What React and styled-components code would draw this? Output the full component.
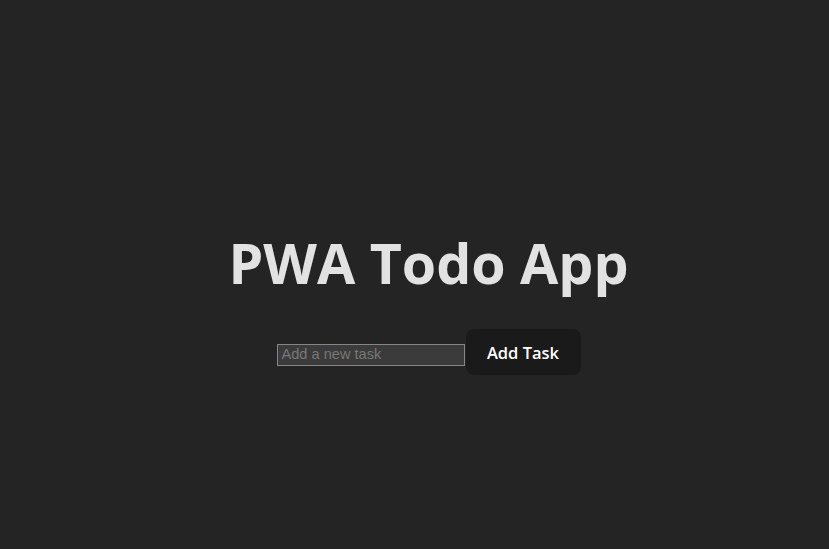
import React from "react";
import styled, { createGlobalStyle } from "styled-components";

const Global = createGlobalStyle`
  html, body { margin: 0; padding: 0; }
  body {
    background: #242424;
    color: rgba(255,255,255,0.87);
    font-family: "Open Sans", "Noto Sans", sans-serif;
    line-height: 1.5;
  }
`;

const Page = styled.main`
  min-height: 100vh;
  box-sizing: border-box;
  padding: 62px 0 4px 28px;
  display: flex;
  flex-direction: column;
  align-items: center;
  justify-content: center;
`;

const Title = styled.h1`
  margin: 0 0 36px;
  font-size: 55.5px;
  font-weight: 700;
  line-height: 1.1;
  color: rgba(255,255,255,0.87);
  letter-spacing: 0;
`;

const Form = styled.form`
  display: flex;
  align-items: baseline;
`;

const Input = styled.input`
  box-sizing: border-box;
  width: 188px;
  height: 22px;
  padding: 0 4px 2px;
  border: 1px solid #858585;
  background: #3b3b3b;
  color: #fff;
  font-family: "Liberation Sans", Arial, sans-serif;
  font-size: 14.6px;
  outline: none;
  &::placeholder { color: #787878; }
`;

const Button = styled.button`
  margin-left: 1px;
  box-sizing: border-box;
  width: 115px;
  height: 46px;
  border-radius: 8px;
  border: 1px solid transparent;
  background: #1a1a1a;
  color: #fff;
  font-family: "Open Sans", "Noto Sans", sans-serif;
  font-size: 16.5px;
  font-weight: 600;
  cursor: pointer;
`;

export default function App() {
  return (
    <>
      <Global />
      <Page>
        <Title>PWA Todo App</Title>
        <Form onSubmit={(e) => e.preventDefault()}>
          <Input placeholder="Add a new task" />
          <Button type="submit">Add Task</Button>
        </Form>
      </Page>
    </>
  );
}
